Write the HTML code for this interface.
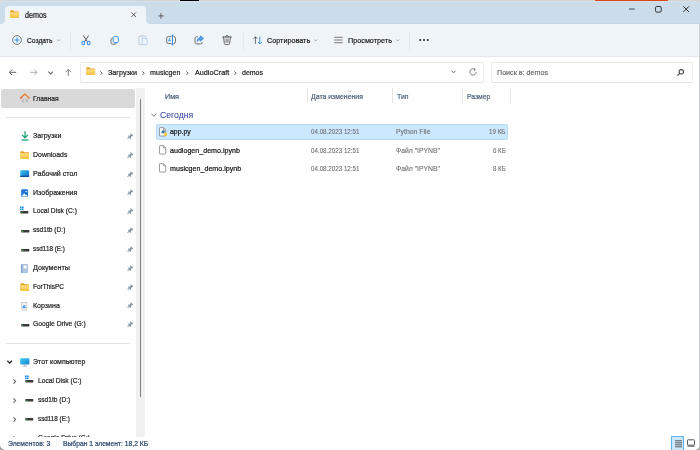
<!DOCTYPE html>
<html lang="ru">
<head>
<meta charset="utf-8">
<title>demos</title>
<style>
*{box-sizing:border-box;margin:0;padding:0}
html,body{width:700px;height:450px;overflow:hidden;background:#d6d5d2}
body{font-family:"Liberation Sans",sans-serif;font-size:9px;color:#1b1b1b;position:relative}
.abs{position:absolute}
.t{position:absolute;white-space:nowrap;line-height:12px;height:12px;transform-origin:0 50%;-webkit-text-stroke:0.22px currentColor}
svg{position:absolute;overflow:visible}
#win{position:absolute;left:0;top:1px;width:700px;height:449px;background:#fff;border-radius:4px 4px 5px 5px;overflow:hidden}
#titlebar{position:absolute;left:0;top:0;width:700px;height:24px;background:#cbdcea;border-top:1px solid #d3e1ed}
#tab{position:absolute;left:4.5px;top:4.5px;width:141.2px;height:21px;background:#eff4f9;border-radius:4px 4px 0 0}
#toolbar{position:absolute;left:0;top:23px;width:700px;height:33px;background:#eff4f9;border-bottom:1px solid #e3e8ee}
.vsep{position:absolute;width:1px;background:#e4e9ee;top:30.5px;height:19px}
#nav{position:absolute;left:0;top:56px;width:699px;height:32px;background:#fff}
.box{position:absolute;top:62px;height:21px;border:1px solid #ebebeb;border-bottom-color:#e2e2e2;border-radius:2px;background:#fff}
.hsep{position:absolute;height:1px;background:#e2e2e2}
.colsep{position:absolute;top:88px;width:1px;height:15px;background:#e5e5e5}
.ns{-webkit-text-stroke:0.05px currentColor}
.hd{color:#4c607a}
.gr{color:#6e6e6e;-webkit-text-stroke:0.1px currentColor}
</style>
</head>
<body>
<div class="abs" style="left:180px;top:0;width:19px;height:1px;background:#000"></div>
<div class="abs" style="left:595px;top:0;width:73px;height:2px;background:#d9491d"></div>
<svg width="0" height="0" style="left:0;top:0"><defs><linearGradient id="fg" x1="0" y1="0" x2="0" y2="1"><stop offset="0" stop-color="#ffe08a"/><stop offset="0.45" stop-color="#fbd262"/><stop offset="1" stop-color="#f5c042"/></linearGradient></defs></svg>
<div id="win">
  <div id="titlebar"></div>
  <div class="abs" style="left:149.7px;top:22px;width:551px;height:1px;background:#c5d6e6"></div>
  <div id="tab"></div>
  <div id="toolbar"></div>
  <div class="abs" style="left:0.5px;top:19px;width:4px;height:4px;background:radial-gradient(circle at 0 0,rgba(239,244,249,0) 3.6px,#eff4f9 4.2px)"></div>
  <div class="abs" style="left:145.7px;top:19px;width:4px;height:4px;background:radial-gradient(circle at 100% 0,rgba(239,244,249,0) 3.6px,#eff4f9 4.2px)"></div>
  <div id="nav"></div>
</div>
<div id="layer" class="abs" style="left:0;top:0;width:700px;height:450px;will-change:transform;clip-path:inset(1px 0 0 0 round 4px 4px 5px 5px)">
<svg style="left:10px;top:10.3px" width="9.3" height="8.3" viewBox="0 0 10 9"><path d="M0.3 1.2Q0.3 0.3 1.2 0.3H3.4L4.6 1.5H8.8Q9.7 1.5 9.7 2.4V7.8Q9.7 8.7 8.8 8.7H1.2Q0.3 8.7 0.3 7.8Z" fill="#e6a01f"/><path d="M0.3 3.3Q0.3 2.5 1.2 2.5H8.8Q9.7 2.5 9.7 3.3V7.8Q9.7 8.7 8.8 8.7H1.2Q0.3 8.7 0.3 7.8Z" fill="url(#fg)"/></svg>
<div class="t" style="left:25.40px;top:10px;font-size:8.20px;transform:scaleX(0.8821);color:#1a1a1a">demos</div>
<svg style="left:130.8px;top:11.8px" width="5.4" height="5.4" viewBox="0 0 6 6"><path d="M0.4 0.4L5.6 5.6M5.6 0.4L0.4 5.6" stroke="#3a3a3a" stroke-width="0.9" fill="none"/></svg>
<svg style="left:157.6px;top:12.5px" width="5.9" height="5.9" viewBox="0 0 7 7"><path d="M3.5 0.3V6.7M0.3 3.5H6.7" stroke="#3a3a3a" stroke-width="0.9" fill="none"/></svg>
<svg style="left:629.4px;top:8.4px" width="5.8" height="2" viewBox="0 0 6 2"><path d="M0 1H6" stroke="#222" stroke-width="0.8"/></svg>
<svg style="left:655.2px;top:6.2px" width="6.8" height="6.6" viewBox="0 0 7 7"><rect x="0.5" y="0.5" width="6" height="6" rx="1.3" fill="none" stroke="#222" stroke-width="0.95"/></svg>
<svg style="left:682.9px;top:6.3px" width="6.3" height="6.3" viewBox="0 0 7 7"><path d="M0.4 0.4L6.6 6.6M6.6 0.4L0.4 6.6" stroke="#222" stroke-width="1.05" fill="none"/></svg>
<svg style="left:12px;top:35px" width="10" height="10" viewBox="0 0 10 10"><circle cx="5" cy="5" r="4.4" fill="none" stroke="#555" stroke-width="0.75"/><path d="M5 2.5V7.5M2.5 5H7.5" stroke="#2a92e6" stroke-width="1"/></svg>
<div class="t" style="left:26.60px;top:35px;font-size:8.10px;transform:scaleX(0.8252)">Создать</div>
<svg style="left:56.8px;top:39.4px" width="3.4" height="2.55" viewBox="0 0 4 3"><path d="M0.3 0.5L2 2.3L3.7 0.5" stroke="#777" stroke-width="0.7" fill="none"/></svg>
<div class="vsep" style="left:70px"></div>
<svg style="left:81px;top:35px" width="10" height="10" viewBox="0 0 10 10"><path d="M2.4 0.5L6.4 6.8M7.6 0.5L3.6 6.8" stroke="#5c5c5c" stroke-width="1" fill="none"/><ellipse cx="2.3" cy="8" rx="1.4" ry="1.7" fill="none" stroke="#2f8fe3" stroke-width="1.05"/><ellipse cx="7.7" cy="8" rx="1.4" ry="1.7" fill="none" stroke="#2f8fe3" stroke-width="1.05"/></svg>
<svg style="left:109.7px;top:35.6px" width="9.2" height="8.6" viewBox="0 0 10 10"><path d="M2.8 2.6Q0.8 2.6 0.8 4.5V7.6Q0.8 9.5 2.8 9.5H5.2Q7 9.5 7 8" fill="none" stroke="#5c5c5c" stroke-width="1"/><rect x="3.4" y="0.6" width="6" height="7" rx="1.4" fill="#eff4f9" stroke="#2f8fe3" stroke-width="1.05"/></svg>
<svg style="left:138px;top:35px" width="10" height="10" viewBox="0 0 10 10"><rect x="0.8" y="1.2" width="7" height="8.2" rx="1.2" fill="none" stroke="#b9c3cd" stroke-width="0.8"/><rect x="4" y="3.6" width="5.2" height="6" rx="1" fill="#eff4f9" stroke="#a8c6e6" stroke-width="0.8"/><rect x="2.8" y="0.4" width="3" height="1.6" rx="0.6" fill="#eff4f9" stroke="#b9c3cd" stroke-width="0.6"/></svg>
<svg style="left:166px;top:35px" width="10" height="10" viewBox="0 0 10 10"><rect x="0.6" y="1.6" width="8.9" height="6.9" rx="1.7" fill="none" stroke="#5a5a5a" stroke-width="0.85"/><path d="M6.5 0.2V9.8" stroke="#eff4f9" stroke-width="2"/><path d="M6.5 0.2V9.8M5.5 0.2H7.5M5.5 9.8H7.5" stroke="#1f7bd8" stroke-width="0.85" fill="none"/><path d="M2.2 6.4L3.5 3.4L4.8 6.4M2.7 5.5H4.3" stroke="#2f8fe3" stroke-width="0.7" fill="none"/></svg>
<svg style="left:194px;top:35px" width="10" height="10" viewBox="0 0 10 10"><path d="M3.8 1.8H2.6Q1 1.8 1 3.4V7.3Q1 8.9 2.6 8.9H6.6Q8.2 8.9 8.2 7.3V6.9" fill="none" stroke="#555" stroke-width="0.85"/><path d="M6.3 0.8L9.5 3.5L6.3 6.2V4.7Q4.3 4.6 3.1 6.5Q3.3 2.8 6.3 2.4Z" fill="#5aa3ea" stroke="#1f7bd8" stroke-width="0.7" stroke-linejoin="round"/></svg>
<svg style="left:222px;top:35px" width="10" height="10" viewBox="0 0 10 10"><path d="M0.6 2H9.4M3.6 2Q3.6 0.5 5 0.5Q6.4 0.5 6.4 2M1.6 2L2.3 8.4Q2.4 9.5 3.5 9.5H6.5Q7.6 9.5 7.7 8.4L8.4 2M4.1 4V7.4M5.9 4V7.4" fill="none" stroke="#444" stroke-width="0.8" stroke-linecap="round"/></svg>
<div class="vsep" style="left:243px"></div>
<svg style="left:252.8px;top:35.8px" width="9.4" height="8.6" viewBox="0 0 11 10"><path d="M2.8 9.2V1M0.6 3.2L2.8 0.9L5 3.2" fill="none" stroke="#4a4a4a" stroke-width="0.95"/><path d="M8 0.8V9.2M5.7 6.9L8 9.3L10.3 6.9" fill="none" stroke="#2f8fe3" stroke-width="1.1"/></svg>
<div class="t" style="left:266.60px;top:35px;font-size:8.10px;transform:scaleX(0.8926)">Сортировать</div>
<svg style="left:314px;top:39.4px" width="3.4" height="2.55" viewBox="0 0 4 3"><path d="M0.3 0.5L2 2.3L3.7 0.5" stroke="#777" stroke-width="0.7" fill="none"/></svg>
<svg style="left:334.3px;top:36.3px" width="9" height="8" viewBox="0 0 10 8"><path d="M0.3 1H9.7M0.3 4H9.7M0.3 7H9.7" stroke="#777" stroke-width="1.1"/></svg>
<div class="t" style="left:348.00px;top:35px;font-size:8.10px;transform:scaleX(0.8949)">Просмотреть</div>
<svg style="left:396.3px;top:39.4px" width="3.4" height="2.55" viewBox="0 0 4 3"><path d="M0.3 0.5L2 2.3L3.7 0.5" stroke="#777" stroke-width="0.7" fill="none"/></svg>
<div class="vsep" style="left:409px"></div>
<svg style="left:419px;top:39px" width="10" height="2" viewBox="0 0 10 2"><circle cx="1.2" cy="1" r="0.95" fill="#1a1a1a"/><circle cx="5" cy="1" r="0.95" fill="#1a1a1a"/><circle cx="8.8" cy="1" r="0.95" fill="#1a1a1a"/></svg>
<svg style="left:8.8px;top:69px" width="7.4" height="6.6" viewBox="0 0 8 7"><path d="M7.8 3.5H0.6M3.4 0.5L0.5 3.5L3.4 6.5" fill="none" stroke="#555" stroke-width="1"/></svg>
<svg style="left:29.5px;top:69px" width="7.4" height="6.6" viewBox="0 0 8 7"><path d="M0.2 3.5H7.4M4.6 0.5L7.5 3.5L4.6 6.5" fill="none" stroke="#a3a3a3" stroke-width="0.95"/></svg>
<svg style="left:48.1px;top:70.6px" width="5.3" height="3.975" viewBox="0 0 4 3"><path d="M0.3 0.5L2 2.3L3.7 0.5" stroke="#666" stroke-width="0.85" fill="none"/></svg>
<svg style="left:64.9px;top:68.8px" width="6.6" height="7.2" viewBox="0 0 7 8"><path d="M3.5 7.6V0.7M0.5 3.5L3.5 0.5L6.5 3.5" fill="none" stroke="#6e6e6e" stroke-width="1"/></svg>
<div class="box" style="left:80px;width:404px"></div>
<svg style="left:86px;top:67.4px" width="9.5" height="8.4" viewBox="0 0 10 9"><path d="M0.3 1.2Q0.3 0.3 1.2 0.3H3.4L4.6 1.5H8.8Q9.7 1.5 9.7 2.4V7.8Q9.7 8.7 8.8 8.7H1.2Q0.3 8.7 0.3 7.8Z" fill="#e6a01f"/><path d="M0.3 3.3Q0.3 2.5 1.2 2.5H8.8Q9.7 2.5 9.7 3.3V7.8Q9.7 8.7 8.8 8.7H1.2Q0.3 8.7 0.3 7.8Z" fill="url(#fg)"/></svg>
<svg style="left:99.5px;top:70.6px" width="2.7" height="4.3" viewBox="0 0 3 5"><path d="M0.4 0.4L2.5 2.5L0.4 4.6" fill="none" stroke="#3a3a3a" stroke-width="0.95"/></svg>
<div class="t" style="left:108.00px;top:67px;font-size:8.10px;transform:scaleX(0.8895)">Загрузки</div>
<svg style="left:142.3px;top:70.6px" width="2.7" height="4.3" viewBox="0 0 3 5"><path d="M0.4 0.4L2.5 2.5L0.4 4.6" fill="none" stroke="#3a3a3a" stroke-width="0.95"/></svg>
<div class="t" style="left:150.00px;top:67px;font-size:8.10px;transform:scaleX(0.8798)">musicgen</div>
<svg style="left:186.3px;top:70.6px" width="2.7" height="4.3" viewBox="0 0 3 5"><path d="M0.4 0.4L2.5 2.5L0.4 4.6" fill="none" stroke="#3a3a3a" stroke-width="0.95"/></svg>
<div class="t" style="left:194.50px;top:67px;font-size:8.10px;transform:scaleX(0.8936)">AudioCraft</div>
<svg style="left:234.3px;top:70.6px" width="2.7" height="4.3" viewBox="0 0 3 5"><path d="M0.4 0.4L2.5 2.5L0.4 4.6" fill="none" stroke="#3a3a3a" stroke-width="0.95"/></svg>
<div class="t" style="left:242.00px;top:67px;font-size:8.10px;transform:scaleX(0.8642)">demos</div>
<svg style="left:451.1px;top:70.4px" width="5" height="3.75" viewBox="0 0 4 3"><path d="M0.3 0.5L2 2.3L3.7 0.5" stroke="#666" stroke-width="0.75" fill="none"/></svg>
<svg style="left:469px;top:68px" width="8" height="8" viewBox="0 0 8 8"><path d="M7.2 4A3.2 3.2 0 1 1 5.8 1.35" fill="none" stroke="#666" stroke-width="0.8"/><path d="M4.6 0.3L6.3 1.3L5.3 3" fill="none" stroke="#666" stroke-width="0.8"/></svg>
<div class="box" style="left:491px;width:202px"></div>
<div class="t" style="left:496.50px;top:67px;font-size:8.10px;transform:scaleX(0.8825);color:#6b6b6b">Поиск в: demos</div>
<svg style="left:677px;top:69px" width="7" height="7" viewBox="0 0 7 7"><circle cx="4.3" cy="2.8" r="2.2" fill="none" stroke="#4a4a4a" stroke-width="1.1"/><path d="M2.7 4.4L0.4 6.7" stroke="#4a4a4a" stroke-width="1.2"/></svg>
<div class="abs" style="left:1.3px;top:89px;width:133.5px;height:18.7px;background:#d9d9d9;border-radius:2px"></div>
<svg style="left:19.8px;top:93.4px" width="9.8" height="9.6" viewBox="0 0 10 10"><defs><linearGradient id="hg" x1="0" y1="1" x2="1" y2="0"><stop offset="0" stop-color="#e4572a"/><stop offset="1" stop-color="#f39a2e"/></linearGradient><linearGradient id="hb" x1="0" y1="0" x2="0" y2="1"><stop offset="0" stop-color="#e9e9e9"/><stop offset="1" stop-color="#b4b4b4"/></linearGradient></defs><path d="M1.7 4.8L5 2L8.3 4.8V9.6H1.7Z" fill="url(#hb)"/><rect x="4.1" y="6.6" width="1.8" height="3" fill="#d9d9d9"/><path d="M0.6 5.3L5 1.1L9.4 5.3" fill="none" stroke="url(#hg)" stroke-width="1.5" stroke-linejoin="round" stroke-linecap="round"/></svg>
<div class="t" style="left:32.70px;top:93px;font-size:8.10px;transform:scaleX(0.8306)">Главная</div>
<div class="hsep" style="left:6px;top:117px;width:124px"></div>
<div class="abs" style="left:136px;top:88px;width:9px;height:348.5px;background:#f0f0f0"></div>
<div class="abs" style="left:139.5px;top:99px;width:1.6px;height:298px;background:#7e7e7e;border-radius:1px"></div>
<div class="t" style="left:32.60px;top:130px;font-size:8.10px;transform:scaleX(0.8711)">Загрузки</div>
<svg style="left:126.7px;top:132.9px" width="6.4" height="6.2" viewBox="0 0 6.4 6.2"><path d="M3.6 0.2L6.3 2.3L5.7 3.2L4.9 3.1L4.0 4.6L4.2 5.6L3.6 5.9L2.6 4.9L0.6 6.1L0.2 5.6L1.8 4.0L0.9 2.9L1.4 2.4L2.4 2.7L3.6 1.7L3.2 0.9Z" fill="#8b99a6"/></svg>
<svg style="left:20.8px;top:131px" width="8" height="10" viewBox="0 0 8 10"><path d="M4 0.3V6.6M1.1 3.9L4 6.8L6.9 3.9" fill="none" stroke="#17a06c" stroke-width="1.25"/><path d="M0.5 9H7.5" stroke="#17a06c" stroke-width="1.25"/></svg>
<div class="t" style="left:32.60px;top:149px;font-size:8.10px;transform:scaleX(0.8588)">Downloads</div>
<svg style="left:126.7px;top:151.74px" width="6.4" height="6.2" viewBox="0 0 6.4 6.2"><path d="M3.6 0.2L6.3 2.3L5.7 3.2L4.9 3.1L4.0 4.6L4.2 5.6L3.6 5.9L2.6 4.9L0.6 6.1L0.2 5.6L1.8 4.0L0.9 2.9L1.4 2.4L2.4 2.7L3.6 1.7L3.2 0.9Z" fill="#8b99a6"/></svg>
<svg style="left:20.3px;top:150.64px" width="9.4" height="8.2" viewBox="0 0 10 9"><path d="M0.3 1.2Q0.3 0.3 1.2 0.3H3.4L4.6 1.5H8.8Q9.7 1.5 9.7 2.4V7.8Q9.7 8.7 8.8 8.7H1.2Q0.3 8.7 0.3 7.8Z" fill="#e6a01f"/><path d="M0.3 3.3Q0.3 2.5 1.2 2.5H8.8Q9.7 2.5 9.7 3.3V7.8Q9.7 8.7 8.8 8.7H1.2Q0.3 8.7 0.3 7.8Z" fill="url(#fg)"/></svg>
<div class="t" style="left:32.60px;top:168px;font-size:8.10px;transform:scaleX(0.8728)">Рабочий стол</div>
<svg style="left:126.7px;top:170.58px" width="6.4" height="6.2" viewBox="0 0 6.4 6.2"><path d="M3.6 0.2L6.3 2.3L5.7 3.2L4.9 3.1L4.0 4.6L4.2 5.6L3.6 5.9L2.6 4.9L0.6 6.1L0.2 5.6L1.8 4.0L0.9 2.9L1.4 2.4L2.4 2.7L3.6 1.7L3.2 0.9Z" fill="#8b99a6"/></svg>
<svg style="left:20.3px;top:170.08px" width="9.4" height="7.4" viewBox="0 0 10 8"><defs><linearGradient id="dg" x1="0" y1="0" x2="1" y2="1"><stop offset="0" stop-color="#35c7ee"/><stop offset="1" stop-color="#1667c4"/></linearGradient></defs><rect x="0.2" y="0.2" width="9.6" height="7.2" rx="0.9" fill="url(#dg)"/><rect x="0.2" y="6.2" width="9.6" height="1.4" fill="#0f4fa0"/></svg>
<div class="t" style="left:32.60px;top:187px;font-size:8.10px;transform:scaleX(0.8722)">Изображения</div>
<svg style="left:126.7px;top:189.42px" width="6.4" height="6.2" viewBox="0 0 6.4 6.2"><path d="M3.6 0.2L6.3 2.3L5.7 3.2L4.9 3.1L4.0 4.6L4.2 5.6L3.6 5.9L2.6 4.9L0.6 6.1L0.2 5.6L1.8 4.0L0.9 2.9L1.4 2.4L2.4 2.7L3.6 1.7L3.2 0.9Z" fill="#8b99a6"/></svg>
<svg style="left:20.7px;top:188.52px" width="7.4" height="8.4" viewBox="0 0 8 9"><rect x="0.2" y="0.3" width="7.4" height="8.4" rx="1.1" fill="#1b74d8"/><path d="M0.6 8.2L3.4 4.6L5.2 6.6L6 5.8L7.4 8.2Z" fill="#fff"/><circle cx="5.6" cy="2.6" r="0.8" fill="#fff"/></svg>
<div class="t" style="left:32.60px;top:205px;font-size:8.10px;transform:scaleX(0.8268)">Local Disk (C:)</div>
<svg style="left:126.7px;top:208.26px" width="6.4" height="6.2" viewBox="0 0 6.4 6.2"><path d="M3.6 0.2L6.3 2.3L5.7 3.2L4.9 3.1L4.0 4.6L4.2 5.6L3.6 5.9L2.6 4.9L0.6 6.1L0.2 5.6L1.8 4.0L0.9 2.9L1.4 2.4L2.4 2.7L3.6 1.7L3.2 0.9Z" fill="#8b99a6"/></svg>
<svg style="left:20.3px;top:206.06px" width="8.6" height="9" viewBox="0 0 9 9"><rect x="0.3" y="5" width="8.4" height="2.6" rx="0.6" fill="#3a3a3a"/><rect x="1" y="5.9" width="1.7" height="0.8" fill="#36c048"/><rect x="0" y="0.3" width="1.7" height="1.7" fill="#1e8ee6"/><rect x="2.1" y="0.3" width="1.7" height="1.7" fill="#1e8ee6"/><rect x="0" y="2.4" width="1.7" height="1.7" fill="#1e8ee6"/><rect x="2.1" y="2.4" width="1.7" height="1.7" fill="#1e8ee6"/></svg>
<div class="t" style="left:32.60px;top:224px;font-size:8.10px;transform:scaleX(0.8180)">ssd1tb (D:)</div>
<svg style="left:126.7px;top:227.1px" width="6.4" height="6.2" viewBox="0 0 6.4 6.2"><path d="M3.6 0.2L6.3 2.3L5.7 3.2L4.9 3.1L4.0 4.6L4.2 5.6L3.6 5.9L2.6 4.9L0.6 6.1L0.2 5.6L1.8 4.0L0.9 2.9L1.4 2.4L2.4 2.7L3.6 1.7L3.2 0.9Z" fill="#8b99a6"/></svg>
<svg style="left:20.5px;top:224.7px" width="8.6" height="9" viewBox="0 0 9 9"><rect x="0.3" y="5" width="8.4" height="2.6" rx="0.6" fill="#3a3a3a"/><rect x="1" y="5.9" width="1.7" height="0.8" fill="#36c048"/></svg>
<div class="t" style="left:32.60px;top:243px;font-size:8.10px;transform:scaleX(0.7814)">ssd118 (E:)</div>
<svg style="left:126.7px;top:245.94px" width="6.4" height="6.2" viewBox="0 0 6.4 6.2"><path d="M3.6 0.2L6.3 2.3L5.7 3.2L4.9 3.1L4.0 4.6L4.2 5.6L3.6 5.9L2.6 4.9L0.6 6.1L0.2 5.6L1.8 4.0L0.9 2.9L1.4 2.4L2.4 2.7L3.6 1.7L3.2 0.9Z" fill="#8b99a6"/></svg>
<svg style="left:20.5px;top:243.54px" width="8.6" height="9" viewBox="0 0 9 9"><rect x="0.3" y="5" width="8.4" height="2.6" rx="0.6" fill="#3a3a3a"/><rect x="1" y="5.9" width="1.7" height="0.8" fill="#36c048"/></svg>
<div class="t" style="left:32.60px;top:262px;font-size:8.10px;transform:scaleX(0.8837)">Документы</div>
<svg style="left:126.7px;top:264.78px" width="6.4" height="6.2" viewBox="0 0 6.4 6.2"><path d="M3.6 0.2L6.3 2.3L5.7 3.2L4.9 3.1L4.0 4.6L4.2 5.6L3.6 5.9L2.6 4.9L0.6 6.1L0.2 5.6L1.8 4.0L0.9 2.9L1.4 2.4L2.4 2.7L3.6 1.7L3.2 0.9Z" fill="#8b99a6"/></svg>
<svg style="left:21px;top:264.18px" width="7" height="9" viewBox="0 0 7 9"><rect x="0.3" y="0.4" width="6.2" height="8.2" rx="0.7" fill="#c3d3e8" stroke="#7d9cc4" stroke-width="0.6"/><rect x="0.3" y="0.4" width="1.2" height="8.2" fill="#7d9cc4"/><rect x="3" y="1.5" width="2.6" height="2.8" fill="#f4f8fc"/><path d="M2.2 5.8H5.6M2.2 7H5.6" stroke="#8fabd0" stroke-width="0.5"/></svg>
<div class="t" style="left:32.60px;top:281px;font-size:8.10px;transform:scaleX(0.7981)">ForThisPC</div>
<svg style="left:126.7px;top:283.62px" width="6.4" height="6.2" viewBox="0 0 6.4 6.2"><path d="M3.6 0.2L6.3 2.3L5.7 3.2L4.9 3.1L4.0 4.6L4.2 5.6L3.6 5.9L2.6 4.9L0.6 6.1L0.2 5.6L1.8 4.0L0.9 2.9L1.4 2.4L2.4 2.7L3.6 1.7L3.2 0.9Z" fill="#8b99a6"/></svg>
<svg style="left:20.3px;top:282.52px" width="9.4" height="8.2" viewBox="0 0 10 9"><path d="M0.3 1.2Q0.3 0.3 1.2 0.3H3.4L4.6 1.5H8.8Q9.7 1.5 9.7 2.4V7.8Q9.7 8.7 8.8 8.7H1.2Q0.3 8.7 0.3 7.8Z" fill="#e6a01f"/><path d="M0.3 3.3Q0.3 2.5 1.2 2.5H8.8Q9.7 2.5 9.7 3.3V7.8Q9.7 8.7 8.8 8.7H1.2Q0.3 8.7 0.3 7.8Z" fill="url(#fg)"/></svg>
<div class="t" style="left:32.60px;top:300px;font-size:8.10px;transform:scaleX(0.8705)">Корзина</div>
<svg style="left:126.7px;top:302.46px" width="6.4" height="6.2" viewBox="0 0 6.4 6.2"><path d="M3.6 0.2L6.3 2.3L5.7 3.2L4.9 3.1L4.0 4.6L4.2 5.6L3.6 5.9L2.6 4.9L0.6 6.1L0.2 5.6L1.8 4.0L0.9 2.9L1.4 2.4L2.4 2.7L3.6 1.7L3.2 0.9Z" fill="#8b99a6"/></svg>
<svg style="left:21.4px;top:301.5px" width="6.4" height="8.6" viewBox="0 0 6.4 8.6"><path d="M0.4 0.5H6L5.4 8.2H1Z" fill="#eef1f5" stroke="#b4bcc6" stroke-width="0.6"/><path d="M1.9 5.6L3.2 3.2L4.5 5.6Z" fill="none" stroke="#2a86e0" stroke-width="0.9"/><path d="M0.4 0.5H6" stroke="#c9d0d8" stroke-width="0.8"/></svg>
<div class="t" style="left:32.60px;top:318px;font-size:8.10px;transform:scaleX(0.8335)">Google Drive (G:)</div>
<svg style="left:126.7px;top:321.3px" width="6.4" height="6.2" viewBox="0 0 6.4 6.2"><path d="M3.6 0.2L6.3 2.3L5.7 3.2L4.9 3.1L4.0 4.6L4.2 5.6L3.6 5.9L2.6 4.9L0.6 6.1L0.2 5.6L1.8 4.0L0.9 2.9L1.4 2.4L2.4 2.7L3.6 1.7L3.2 0.9Z" fill="#8b99a6"/></svg>
<svg style="left:20.5px;top:318.9px" width="8.6" height="9" viewBox="0 0 9 9"><rect x="0.3" y="5" width="8.4" height="2.6" rx="0.6" fill="#3a3a3a"/><rect x="1" y="5.9" width="1.7" height="0.8" fill="#36c048"/></svg>
<div class="hsep" style="left:6px;top:343px;width:124px"></div>
<svg style="left:7.2px;top:360.3px" width="5.4" height="4.05" viewBox="0 0 4 3"><path d="M0.3 0.5L2 2.3L3.7 0.5" stroke="#222" stroke-width="1" fill="none"/></svg>
<svg style="left:19.9px;top:357.9px" width="9.6" height="8.8" viewBox="0 0 10 9"><defs><linearGradient id="pg" x1="0" y1="0" x2="1" y2="1"><stop offset="0" stop-color="#3fd0f0"/><stop offset="1" stop-color="#1a7fd0"/></linearGradient></defs><rect x="0.2" y="0.2" width="9.6" height="6.6" rx="0.8" fill="url(#pg)"/><rect x="4.3" y="6.8" width="1.4" height="1.2" fill="#9aa5b0"/><rect x="2.8" y="7.9" width="4.4" height="0.8" fill="#9aa5b0"/></svg>
<div class="t" style="left:32.60px;top:356px;font-size:8.10px;transform:scaleX(0.8649)">Этот компьютер</div>
<svg style="left:13.1px;top:378.9px" width="3.2" height="5.2" viewBox="0 0 3 5"><path d="M0.4 0.4L2.5 2.5L0.4 4.6" fill="none" stroke="#666" stroke-width="1"/></svg>
<svg style="left:25.2px;top:375.4px" width="8.6" height="9" viewBox="0 0 9 9"><rect x="0.3" y="5" width="8.4" height="2.6" rx="0.6" fill="#3a3a3a"/><rect x="1" y="5.9" width="1.7" height="0.8" fill="#36c048"/><rect x="0" y="0.3" width="1.7" height="1.7" fill="#1e8ee6"/><rect x="2.1" y="0.3" width="1.7" height="1.7" fill="#1e8ee6"/><rect x="0" y="2.4" width="1.7" height="1.7" fill="#1e8ee6"/><rect x="2.1" y="2.4" width="1.7" height="1.7" fill="#1e8ee6"/></svg>
<div class="t" style="left:37.70px;top:375px;font-size:8.10px;transform:scaleX(0.8212)">Local Disk (C:)</div>
<svg style="left:13.1px;top:397.8px" width="3.2" height="5.2" viewBox="0 0 3 5"><path d="M0.4 0.4L2.5 2.5L0.4 4.6" fill="none" stroke="#666" stroke-width="1"/></svg>
<svg style="left:25.2px;top:394.35px" width="8.6" height="9" viewBox="0 0 9 9"><rect x="0.3" y="5" width="8.4" height="2.6" rx="0.6" fill="#3a3a3a"/><rect x="1" y="5.9" width="1.7" height="0.8" fill="#36c048"/></svg>
<div class="t" style="left:37.70px;top:394px;font-size:8.10px;transform:scaleX(0.8155)">ssd1tb (D:)</div>
<svg style="left:13.1px;top:416.7px" width="3.2" height="5.2" viewBox="0 0 3 5"><path d="M0.4 0.4L2.5 2.5L0.4 4.6" fill="none" stroke="#666" stroke-width="1"/></svg>
<svg style="left:25.2px;top:413.25px" width="8.6" height="9" viewBox="0 0 9 9"><rect x="0.3" y="5" width="8.4" height="2.6" rx="0.6" fill="#3a3a3a"/><rect x="1" y="5.9" width="1.7" height="0.8" fill="#36c048"/></svg>
<div class="t" style="left:37.70px;top:413px;font-size:8.10px;transform:scaleX(0.7790)">ssd118 (E:)</div>
<svg style="left:13.1px;top:435.6px" width="3.2" height="5.2" viewBox="0 0 3 5"><path d="M0.4 0.4L2.5 2.5L0.4 4.6" fill="none" stroke="#666" stroke-width="1"/></svg>
<svg style="left:25.2px;top:432.15px" width="8.6" height="9" viewBox="0 0 9 9"><rect x="0.3" y="5" width="8.4" height="2.6" rx="0.6" fill="#3a3a3a"/><rect x="1" y="5.9" width="1.7" height="0.8" fill="#36c048"/></svg>
<div class="t" style="left:37.70px;top:432px;font-size:8.10px;transform:scaleX(0.8209)">Google Drive (G:)</div>
<div class="colsep" style="left:306.6px"></div><div class="colsep" style="left:391.7px"></div><div class="colsep" style="left:461.9px"></div><div class="colsep" style="left:509.8px"></div>
<div class="t hd" style="left:165.10px;top:91px;font-size:8.10px;transform:scaleX(0.8864)">Имя</div>
<div class="t hd" style="left:311.00px;top:91px;font-size:8.10px;transform:scaleX(0.8543)">Дата изменения</div>
<div class="t hd" style="left:396.50px;top:91px;font-size:8.10px;transform:scaleX(0.8527)">Тип</div>
<div class="t hd" style="left:467.00px;top:91px;font-size:8.10px;transform:scaleX(0.8374)">Размер</div>
<svg style="left:348.2px;top:89.6px" width="3.6" height="2.7" viewBox="0 0 4 3"><path d="M0.3 0.5L2 2.3L3.7 0.5" stroke="#8a8a8a" stroke-width="0.6" fill="none"/></svg>
<svg style="left:151.1px;top:112.6px" width="5.8" height="4.35" viewBox="0 0 4 3"><path d="M0.3 0.5L2 2.3L3.7 0.5" stroke="#6a6a6a" stroke-width="0.62" fill="none"/></svg>
<div class="t ns" style="left:160.00px;top:109px;font-size:9.30px;transform:scaleX(0.9309);color:#3645a0">Сегодня</div>
<div class="abs" style="left:155.6px;top:123.5px;width:352px;height:16.2px;background:#cce8ff;border:1px solid #b4dbfc;border-radius:2px"></div>
<svg style="left:158.7px;top:126.65px" width="7.4" height="9.7" viewBox="0 0 8 10"><path d="M0.5 1Q0.5 0.5 1 0.5H4.9L7.3 2.9V9Q7.3 9.5 6.8 9.5H1Q0.5 9.5 0.5 9Z" fill="#fff" stroke="#808080" stroke-width="0.85"/><path d="M4.9 0.5V2.9H7.3" fill="none" stroke="#808080" stroke-width="0.7"/><path d="M3 5.2Q3 3.4 4.7 3.4Q6.3 3.4 6.3 4.6V5.6H4.3Q3 6.6 3 5.2Z" fill="#3572a5"/><rect x="2.6" y="4.4" width="3.2" height="2.2" rx="0.7" fill="#3572a5"/><path d="M8.6 7.4Q8.6 9.6 6.8 9.6Q5.2 9.6 5.2 8.4V7.2H7.2Q8.6 6.2 8.6 7.4Z" fill="#f7cb3f"/><rect x="5.4" y="6" width="3.4" height="2.4" rx="0.7" fill="#f7cb3f"/></svg>
<div class="t" style="left:170.00px;top:126px;font-size:8.10px;transform:scaleX(0.8545);color:#111">app.py</div>
<div class="t gr" style="left:311.20px;top:126px;font-size:8.10px;transform:scaleX(0.7691)">04.08.2023 12:51</div>
<div class="t gr" style="left:396.00px;top:126px;font-size:8.10px;transform:scaleX(0.8510)">Python File</div>
<div class="t gr" style="left:488.70px;top:126px;font-size:8.10px;transform:scaleX(0.7745)">19 КБ</div>
<svg style="left:158.7px;top:144.85px" width="7.4" height="9.7" viewBox="0 0 8 10"><path d="M0.5 1Q0.5 0.5 1 0.5H4.9L7.3 2.9V9Q7.3 9.5 6.8 9.5H1Q0.5 9.5 0.5 9Z" fill="#fff" stroke="#808080" stroke-width="0.85"/><path d="M4.9 0.5V2.9H7.3" fill="none" stroke="#808080" stroke-width="0.7"/></svg>
<div class="t" style="left:170.00px;top:145px;font-size:8.10px;transform:scaleX(0.8782);color:#111">audiogen_demo.ipynb</div>
<div class="t gr" style="left:311.20px;top:145px;font-size:8.10px;transform:scaleX(0.7691)">04.08.2023 12:51</div>
<div class="t gr" style="left:396.00px;top:145px;font-size:8.10px;transform:scaleX(0.8428)">Файл "IPYNB"</div>
<div class="t gr" style="left:492.50px;top:145px;font-size:8.10px;transform:scaleX(0.7556)">6 КБ</div>
<svg style="left:158.7px;top:162.95px" width="7.4" height="9.7" viewBox="0 0 8 10"><path d="M0.5 1Q0.5 0.5 1 0.5H4.9L7.3 2.9V9Q7.3 9.5 6.8 9.5H1Q0.5 9.5 0.5 9Z" fill="#fff" stroke="#808080" stroke-width="0.85"/><path d="M4.9 0.5V2.9H7.3" fill="none" stroke="#808080" stroke-width="0.7"/></svg>
<div class="t" style="left:170.00px;top:163px;font-size:8.10px;transform:scaleX(0.8798);color:#111">musicgen_demo.ipynb</div>
<div class="t gr" style="left:311.20px;top:163px;font-size:8.10px;transform:scaleX(0.7691)">04.08.2023 12:51</div>
<div class="t gr" style="left:396.00px;top:163px;font-size:8.10px;transform:scaleX(0.8428)">Файл "IPYNB"</div>
<div class="t gr" style="left:492.50px;top:163px;font-size:8.10px;transform:scaleX(0.7556)">8 КБ</div>
<div class="abs" style="left:0;top:436.8px;width:700px;height:14px;background:#fff"></div>
<div class="t" style="left:8.40px;top:438px;font-size:8.10px;transform:scaleX(0.8355);color:#23406b">Элементов: 3</div>
<div class="t" style="left:63.20px;top:438px;font-size:8.10px;transform:scaleX(0.8325);color:#23406b">Выбран 1 элемент: 18,2 КБ</div>
<div class="abs" style="left:56px;top:439px;width:1px;height:10px;background:#f6f6f6"></div>
<div class="abs" style="left:671px;top:436px;width:13px;height:14px;background:#cce8ff;border:1px solid #5fb4ea;border-bottom:0"></div>
<svg style="left:674.6px;top:439.8px" width="7.2" height="8" viewBox="0 0 7 8"><path d="M0 0.8H7M0 2.8H7M0 4.8H7M0 6.8H7" stroke="#4a4a4a" stroke-width="0.9"/></svg>
<svg style="left:686.6px;top:439px" width="8" height="8.6" viewBox="0 0 8 8"><rect x="0.5" y="0.5" width="7" height="5.4" rx="0.6" fill="#fff" stroke="#4a4a4a" stroke-width="0.9"/><path d="M0.4 6.9H7.6" stroke="#4a4a4a" stroke-width="0.9"/></svg>
<div class="abs" style="left:699px;top:24px;width:1px;height:426px;background:#cfd0d1"></div>
</div>
<div id="cbl" class="abs" style="left:-1px;top:444px;width:7px;height:7px;border:1.3px solid #8a8a8a;border-top-color:transparent;border-right-color:transparent;border-radius:0 0 0 6px;transform:rotate(0deg)"></div>
<div id="cbr" class="abs" style="left:694px;top:444px;width:7px;height:7px;border:1.3px solid #9a9a9a;border-top-color:transparent;border-left-color:transparent;border-radius:0 0 6px 0"></div>
</body>
</html>
